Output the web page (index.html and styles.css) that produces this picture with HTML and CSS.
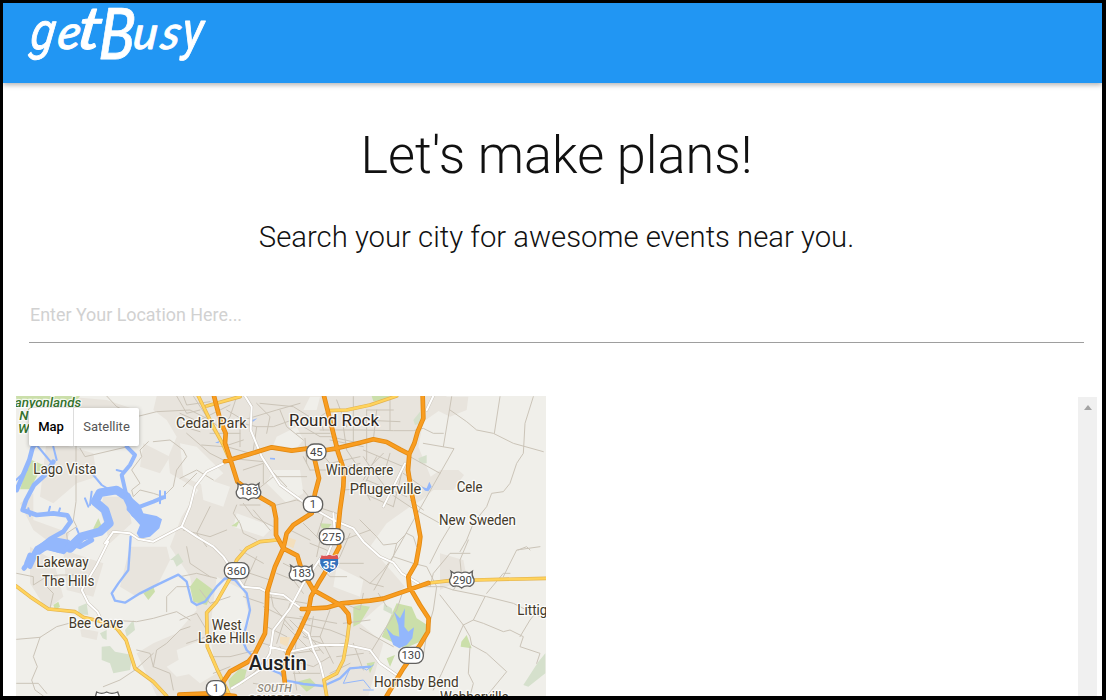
FILE: index.html
```html
<!DOCTYPE html>
<html lang="en">
<head>
<meta charset="utf-8">
<title>getBusy</title>
<link rel="stylesheet" href="styles.css">
</head>
<body>
<div class="page">
  <header class="nav">
    <svg class="logo" viewBox="0 0 210 80" width="210" height="80" role="img" aria-label="getBusy">
      <g class="logo-text">
        <text class="logo-round" transform="translate(26 46) skewX(-8) scale(1 1.15)" font-size="45">g</text>
        <text transform="translate(53 46) skewX(-8)" font-size="48">e</text>
        <text transform="translate(73 46) skewX(-8) scale(1.25 1.15)" font-size="52">t</text>
        <text transform="translate(95 56) skewX(-3) scale(.84 1)" font-size="71">B</text>
        <text transform="translate(129 46) skewX(-6)" font-size="46">u</text>
        <text transform="translate(156 46) skewX(-12)" font-size="47">s</text>
        <text class="logo-round" transform="translate(179 46) skewX(-2) scale(1 1.15)" font-size="46">y</text>
      </g>
    </svg>
  </header>
  <main class="main">
    <h1 class="title">Let's make plans!</h1>
    <p class="subtitle">Search your city for awesome events near you.</p>
    <input class="location" type="text" placeholder="Enter Your Location Here...">
    <div class="results">
      <section class="map">
        <svg class="map-canvas" viewBox="18 18 1590 900" width="530" height="300">
          <rect x="18" y="18" width="1590" height="900" fill="#f0efea"/>
          <g class="urban">
            <path d="M440 18H1310L1290 60L1240 95L1225 170L1262 260L1290 240L1345 240L1362 255L1330 300L1270 300L1235 330L1200 350L1130 400L1080 470L1150 550L1185 590L1105 650L1050 700L1120 760L1075 918H440L380 790L430 760L500 730L560 660L540 560L480 470L515 380L565 300L480 250L475 200L500 140L470 90L430 60Z"/>
            <path d="M150 18L290 30L380 60L300 130L220 110ZM110 150L250 190L260 260L200 280L130 340L90 320ZM280 320L350 320L365 400L300 460L270 360ZM30 340L70 310L70 390L180 430L150 480L70 420ZM400 160L480 200L450 250L390 230ZM60 470L130 510L160 620L110 660L60 580ZM160 480L280 520L250 620L170 600ZM360 470L470 470L480 510L440 590L380 620L330 590ZM210 715L265 725L260 750L215 740ZM1270 20L1375 20L1370 60L1320 80L1280 60ZM1050 360L1090 380L1080 410L1050 440ZM1290 490L1360 510L1370 560L1290 600Z"/>
          </g>
          <g fill="#f0efea">
            <path d="M510 160L560 170L640 250L590 290L520 260ZM800 140L860 110L880 150L860 175L790 165ZM790 240L870 240L880 310L830 340L770 280ZM570 260L660 290L640 350L580 330ZM680 370L790 410L760 440L670 410ZM980 530L1060 570L1050 620L970 590ZM500 780L600 740L620 850L570 880L510 830ZM620 560L700 600L720 690L690 760L620 760L605 680ZM470 830L540 790L550 850L500 860ZM900 20L930 20L920 60L880 60ZM340 900L380 850L390 910Z"/>
          </g>
          <g class="park">
            <path d="M18 18H210L200 32L120 28L20 35ZM65 210L100 225L80 260L60 298L30 298L45 250ZM250 415L265 385L280 420L255 425ZM540 590L560 563L610 600L590 645L550 635ZM400 610L430 590L435 605L415 630ZM664 408L690 390L680 410ZM930 400L965 402L955 415L935 415ZM1160 640L1205 650L1220 685L1260 710L1230 755L1185 775L1115 740ZM1354 755L1370 735L1385 775L1352 770ZM1030 650L1050 645L1080 650L1050 700L1030 710ZM1070 820L1095 815L1080 850ZM1130 805L1155 795L1140 830ZM655 870L690 835L710 840L700 880L660 895ZM860 875L900 865L920 885L890 905ZM1085 18H1140L1120 30L1090 34ZM130 645L145 635L150 650L135 660Z"/>
            <path class="park-dark" d="M275 770L300 768L315 785L368 795L360 840L310 850L300 820L275 810ZM345 720L370 690L375 720L350 740ZM1210 90L1230 65L1235 100L1215 105ZM1225 205L1250 195L1250 220L1230 220ZM480 510L505 490L520 515L500 530L490 510ZM1585 815L1606 790V850L1555 890L1540 885ZM270 730L290 720L290 750L278 745ZM205 650L230 640L235 675L205 672ZM1122 642L1145 655L1150 675L1120 660Z"/>
          </g>
          <path fill="#f3dfbd" d="M830 440L858 450L850 475L828 465ZM810 740L840 742L832 770L810 760Z"/>
          <g class="minor">
            <path d="M210 175L225 200L345 172M198 168V335L190 390L200 410L170 430L175 480M290 18L320 50L380 80L440 65L540 60L600 90L650 130M500 18L530 70L570 60M430 155L480 150L520 180L530 200L500 240L490 290L460 320L430 310L390 300L370 320L365 300L390 280L365 240L395 200L390 180L415 155M520 18L530 45L600 35M20 550L70 560L70 585L110 560L150 555L230 555M120 655L130 610L110 590M20 748L90 742L140 710L195 695M90 742L70 800L82 830L65 870L75 900L100 918M20 880H85L110 910M280 890L330 870L375 840L430 790M295 690L380 695L430 685L500 665L540 690M470 665L470 620L500 590L540 590M430 830L440 780L470 760L510 720L540 710M430 830L480 850L490 900M380 780L420 790L430 830"/>
            <path d="M510 70L600 110L650 170L720 190M530 130L600 190L640 210M560 250L520 290M610 270L560 240L510 265M650 90L740 110L790 110L860 85M650 60L700 90L800 60L870 40M810 60L830 110L880 150M740 40L780 80L770 130M660 205L760 215L830 290M700 240L760 220L760 280M735 305L790 260L890 260M680 345L670 370L690 400L700 430L740 450M690 345L750 345M780 350L860 330L900 345M880 300L920 350L980 370M900 240L980 240L1050 220M930 120L1050 120L1150 122L1210 122L1240 115L1270 130L1300 130M880 110L930 140L960 140L1050 160M1000 110L1010 180L1050 240M880 200L900 240M960 60L930 80L940 120M980 30L1010 110M1000 260L1070 240L1120 190M1000 300L1130 290M1060 200L1080 230L1140 310L1200 350L1290 400M1090 230L1060 290L1080 330M1140 20V120M1070 60L1150 60M1240 160L1332 176L1092 600M1300 170L1325 20M1200 200L1290 250M1180 250L1250 300M1200 330L1240 360M1320 60L1370 95L1400 120L1450 130L1510 160L1600 185M1453 130L1470 20M1570 20L1545 100L1540 190L1520 220L1500 280L1480 305L1445 310L1430 350L1390 400L1370 450L1350 485M1320 410L1290 460L1260 520M1524 480L1550 470L1560 480M1050 390L1100 440L1120 465L1160 460L1190 430L1210 440L1220 470M1160 460L1150 500L1120 540L1080 580M1150 500L1210 520L1250 530L1280 590L1270 660L1250 730L1240 800M1050 560L1080 580L1120 590M1200 590L1260 590L1300 590L1330 600L1430 620L1510 640L1590 680M1260 590L1270 550L1320 490L1380 490M1375 450L1350 510L1355 560L1330 600M1425 620L1390 690L1420 700L1480 725L1500 720L1540 740L1530 770L1590 790L1580 820M1590 470L1520 480L1480 560M1430 610L1480 550H1500M1390 690L1360 705L1290 615M1360 705L1295 850L1270 900M1360 705L1380 740L1385 765L1430 790L1490 845L1430 918M1380 770L1375 850L1390 880L1380 918M1530 740L1560 690L1580 665M1180 600L1160 660L1080 790M1105 610L1130 650M1050 715L1150 770"/>
            <path d="M510 560L560 550L620 565M530 470L540 520L600 560M570 600L600 640L660 620M510 690L560 670L590 720M530 760L590 740M620 700L680 730L700 760M600 800L660 800L740 780M610 850L660 830M700 620L760 640M690 540L750 560L780 570M740 500L700 590M690 480L760 520M800 550L850 570L880 610M820 520L900 560M760 650L820 680L900 690M770 620L890 640M780 600L790 650L850 720M840 640L800 760M770 710L830 740M760 760L850 790L930 780M840 690L890 740L930 740M870 700L960 720L1010 740M880 740L960 770L1000 760M910 680L900 740L940 790M960 660L930 740L970 820M840 810L910 830L960 800M850 850L930 850M770 800L730 850M730 880L800 890M960 850L1020 820M980 800L1060 790M1000 700L1080 690M1000 640L1050 660L1060 610M920 520L960 560L1010 560M900 460L950 480L980 520L1060 520M880 400L930 450L920 500M840 420L900 450M790 410L730 380L700 340M940 380L920 440M1020 430L990 500L970 530M1000 450L1080 420M1030 760L1060 840M860 740L850 830L860 900M820 700L910 790M870 680L980 700M810 770L870 850M600 350L560 430L590 470M520 420L600 440L650 420M730 360L780 420"/>
            <path d="M550 18L590 80M570 90L660 45M680 20L660 80L640 110M690 80L690 170M740 110L730 180M600 130L690 130M575 165L640 170L700 150M520 110L570 125M750 40L850 50L930 100M860 130L960 130M885 145L890 220M925 180L960 220L1050 200M1030 20V160M1070 60V210M1100 60L1090 150M1050 90L1170 95M960 150L1060 170M1060 180L1180 230M1100 200L1060 270M1140 190L1120 260M1070 270L1190 320M1060 310L1150 350M1180 230L1150 350"/>
          </g>
          <g class="river">
            <path d="M68 172L58 210L20 300M130 215L105 255L72 285L48 330L38 360L80 375L130 370L172 376L182 395L160 425L120 447L85 475L60 530" stroke-width="14"/>
            <path d="M180 475L215 440L270 425L298 400L285 360L255 335L270 308L320 300L350 320L375 370" stroke-width="26"/>
            <path d="M350 320L335 255L360 225L375 195L350 170M390 350L430 335L460 322" stroke-width="12"/>
            <path d="M65 180L80 165L130 225M250 255L275 285L300 300M320 240L340 245M18 270L50 240M60 378L55 355M115 370L120 350M145 370L150 355M235 350L225 325M245 305L240 345M210 440L200 415M450 340V303M465 325V305M130 170L140 210" stroke-width="6"/>
            <path d="M42 535L65 505L80 480L115 472L160 485L185 460L205 440M150 480L180 460L210 470L245 450M50 520L60 495" stroke-width="15"/>
            <path d="M362 440L355 540L325 580L305 610L315 632L345 638L390 610L430 590L505 554L530 575L545 635L560 645L585 635L620 590L645 565L675 570L710 610L720 660L708 710L697 750L710 780L760 830L810 850L830 872L880 882L940 888L990 865L1020 835L1080 830" stroke-width="7"/>
            <path d="M1020 835L1000 880L1060 870L1080 895M1050 830L1070 840L1090 825M1060 900L1090 900" stroke-width="3"/>
          </g>
          <path class="water" d="M350 310L390 345L400 370L440 378L456 388L448 415L420 440L390 446L380 430L390 405L350 360ZM75 470L125 440L180 450L150 490L110 480L80 500L50 515ZM1235 290L1250 295L1258 275L1265 290L1255 304L1245 302ZM1152 665L1170 685L1185 655L1183 710L1195 725L1212 712L1207 745L1190 765L1168 775L1150 765L1140 740L1128 713L1150 735L1168 740L1165 705ZM725 90L742 85L728 96ZM780 203L795 204V209L780 208ZM615 158L630 152L625 160Z"/>
          <g class="white"><use href="#local-roads"/></g>
          <g class="white-in">
            <path id="local-roads" d="M705 18L725 50L722 120L755 200L810 285L900 350L970 390L1030 415L1060 455L1110 500L1150 518L1175 550L1225 580M650 216L590 245L555 290L540 350L515 410L430 455L385 447L360 430L310 425L285 460M295 455L260 525L215 600L235 640L262 665L280 700M515 410L560 440L610 470L640 500L680 560L700 590L750 595L780 610L820 615L875 657M935 500L880 580L840 655L790 720L780 790L750 840L690 880L665 895M780 770L840 785L930 765L1010 765L1080 780L1110 820L1160 855M875 715L895 730L910 780L930 820L945 880M1270 18L1250 60M1185 220L1120 350M970 370L975 440L950 500"/>
          </g>
          <g class="yellow-edge"><use href="#yellow"/></g>
          <g class="yellow"><path id="yellow" d="M18 588L60 620L115 657L195 665L220 682L265 692L320 715L348 750L375 835L430 875L470 918M565 18L590 70L615 120L640 165L655 200M590 48L690 20M955 62L1010 60L1080 45L1160 18M800 450L750 455L710 475L680 510L660 565L620 635L590 668L592 770L620 835L660 918M1018 697L1012 745L1000 810L980 850L942 870L950 918M1255 579L1320 572L1395 570L1608 565"/></g>
          <g class="orange-edge"><use href="#orange"/></g>
          <g class="orange"><path id="orange" d="M612 18L620 50L632 95L647 130L645 160L660 205L682 275L715 300L755 325L790 345L798 385L798 435L820 475L862 497L875 540L910 600L960 628L995 648L1015 672L1018 697M645 214L720 192L785 172L845 182L890 176L950 180L980 175L1050 158L1090 148L1130 156L1170 178L1197 192M942 18L965 110L985 190L1002 240L1000 290L990 360L982 440L988 470L965 515L925 580L903 620L895 665L865 730L835 785L820 840L825 882M912 200L927 265L915 310L905 370L850 405L830 430L820 475L795 530L772 605L770 660L765 730L735 790L715 815L660 845L640 875L620 912M1238 18L1240 85L1223 125L1213 160L1198 192L1194 240L1205 310L1220 380L1231 440L1228 465L1218 520L1195 560L1198 590L1230 645L1256 685L1254 725L1230 765L1180 835L1130 918M875 657L950 653L995 640L1080 632L1120 626L1200 598L1255 579M508 914L600 910L675 918"/></g>
          <g class="shield">
            <path d="M683 280L692 286Q704 279 715 285Q726 279 738 286L747 280Q744 292 752 304Q754 318 740 325Q725 321 715 330Q704 321 690 325Q677 318 679 304Q687 293 683 280Z"/>
            <path d="M842 526L851 532Q863 525 874 531Q885 525 897 532L906 526Q903 538 911 550Q913 564 899 571Q884 567 874 576Q863 567 849 571Q836 564 838 550Q846 539 842 526Z"/>
            <path d="M1323 544L1332 550Q1344 543 1355 549Q1366 543 1378 550L1387 544Q1384 556 1392 568Q1394 582 1380 589Q1365 585 1355 594Q1344 585 1330 589Q1317 582 1319 568Q1327 557 1323 544Z"/>
            <path d="M260 906Q275 914 290 906Q305 914 323 906L330 925H255Z"/>
            <rect x="890" y="162" width="58" height="48" rx="22"/><rect x="880" y="319" width="58" height="48" rx="22"/><rect x="928" y="416" width="74" height="48" rx="22"/><rect x="643" y="518" width="74" height="48" rx="22"/><rect x="1166" y="772" width="74" height="48" rx="22"/><rect x="589" y="872" width="58" height="48" rx="22"/>
          </g>
          <path d="M936 497Q945 500 958 494Q970 500 982 494L986 508Q992 535 958 549Q925 535 929 508Z" fill="#3572bd" stroke="#fff" stroke-width="3"/>
          <path d="M935 496Q946 500 958 494Q970 500 982 494L986 507H930Z" fill="#dc5454"/>
          <g class="route"><text x="717" y="315">183</text><text x="875" y="561">183</text><text x="1357" y="581">290</text><text x="919" y="198">45</text><text x="909" y="354">1</text><text x="965" y="452">275</text><text x="680" y="554">360</text><text x="1203" y="808">130</text><text x="618" y="907">1</text><text class="interstate" x="958" y="537">35</text></g>
          <g class="park-label"><text x="14" y="52" textLength="200" lengthAdjust="spacingAndGlyphs">anyonlands</text><text x="28" y="91">N</text><text x="24" y="130">W</text></g>
          <g class="place">
            <text x="70" y="251" textLength="190" lengthAdjust="spacingAndGlyphs">Lago Vista</text>
            <text x="498" y="115" textLength="212" lengthAdjust="spacingAndGlyphs">Cedar Park</text>
            <text x="947" y="254" textLength="203" lengthAdjust="spacingAndGlyphs">Windemere</text>
            <text x="1019" y="313" textLength="215" lengthAdjust="spacingAndGlyphs">Pflugerville</text>
            <text x="1340" y="307" textLength="78" lengthAdjust="spacingAndGlyphs">Cele</text>
            <text x="1287" y="405" textLength="231" lengthAdjust="spacingAndGlyphs">New Sweden</text>
            <text x="79" y="530" textLength="157" lengthAdjust="spacingAndGlyphs">Lakeway</text>
            <text x="96" y="588" textLength="157" lengthAdjust="spacingAndGlyphs">The Hills</text>
            <text x="176" y="714" textLength="164" lengthAdjust="spacingAndGlyphs">Bee Cave</text>
            <text x="605" y="719" textLength="90" lengthAdjust="spacingAndGlyphs">West</text>
            <text x="564" y="760" textLength="172" lengthAdjust="spacingAndGlyphs">Lake Hills</text>
            <text x="1522" y="674" textLength="90" lengthAdjust="spacingAndGlyphs">Littig</text>
            <text x="1092" y="892" textLength="254" lengthAdjust="spacingAndGlyphs">Hornsby Bend</text>
            <text x="1290" y="937" textLength="206" lengthAdjust="spacingAndGlyphs">Webberville</text>
            <text class="town" x="837" y="108" textLength="270" lengthAdjust="spacingAndGlyphs">Round Rock</text>
            <text class="city" x="716" y="839" textLength="174" lengthAdjust="spacingAndGlyphs">Austin</text>
          </g>
          <g class="district"><text x="742" y="905" textLength="103" lengthAdjust="spacingAndGlyphs">SOUTH</text><text x="714" y="938" textLength="160" lengthAdjust="spacingAndGlyphs">CONGRESS</text></g>
        </svg>
        <div class="map-types"><button class="map-type active">Map</button><button class="map-type">Satellite</button></div>
      </section>
      <div class="event-list"><div class="scrollbar"><span class="scroll-up"></span></div></div>
    </div>
  </main>
</div>
</body>
</html>
```
FILE: styles.css
```css
* { box-sizing: border-box; }
body { margin: 0; font-family: Roboto, sans-serif; color: #212121; }
.page { height: 700px; border: 3px solid #000; border-right-width: 4px; border-bottom-width: 4px; background: #fff; overflow: hidden; display: flex; flex-direction: column; }
.nav { height: 80px; flex: none; background: #2196f3; box-shadow: 0 2px 5px rgba(0,0,0,.3); }
.logo { display: block; }
.logo-text { font-family: Lato, sans-serif; font-style: italic; font-weight: 500; fill: #fff; stroke: #fff; stroke-width: .8; stroke-linejoin: round; }
.logo-round { font-family: Roboto, sans-serif; font-weight: 400; }
.main { flex: 1; min-height: 0; padding-left: 13px; padding-right: 5px; }
.title { margin: 41px 0 0; text-align: center; font-size: 52.2px; line-height: 64px; font-weight: 300; color: #111; }
.subtitle { margin: 29px 0 0; text-align: center; font-size: 29.28px; line-height: 40px; font-weight: 300; color: #111; }
.location { display: block; width: calc(100% - 26px); height: 57px; margin: 29px 0 0 13px; padding: 0 1px; border: 0; border-bottom: 1px solid #9e9e9e; outline: 0; font: 400 17.9px Roboto, sans-serif; background: transparent; }
.location::placeholder { color: #d1d1d1; opacity: 1; }
.results { margin-top: 53px; height: 300px; display: flex; }
.map { position: relative; width: 530px; height: 300px; flex: none; overflow: hidden; }
.map-canvas { display: block; }
.map-types { position: absolute; left: 13px; top: 12px; display: flex; height: 38px; border-radius: 2px; background: #fff; box-shadow: 0 1px 4px rgba(0,0,0,.3); }
.map-type { border: 0; background: transparent; padding: 0 0 2px; width: 65px; font: 400 13px Roboto, sans-serif; color: #565656; }
.map-type.active { width: 45px; font-weight: 500; color: #000; border-right: 1px solid #ddd; }
.event-list { flex: 1; display: flex; justify-content: flex-end; padding-top: 1px; }
.scrollbar { width: 19px; background: #f0f0f0; display: flex; justify-content: center; padding-top: 8px; }
.scroll-up { width: 0; height: 0; border: 4px solid transparent; border-top: 0; border-bottom: 5px solid #a3a3a3; }

.urban { fill: #e8e4dd; }
.park { fill: #cbdfaa; }
.park-dark { fill: #d5e0cc; }
.water { fill: #93b7fc; }
.minor, .river, .white, .white-in, .yellow, .yellow-edge, .orange, .orange-edge { fill: none; stroke-linejoin: round; stroke-linecap: round; }
.minor { stroke: #cbc4b8; stroke-width: 3; }
.river { stroke: #93b7fc; }
.white { stroke: #cbc5bb; stroke-width: 9; }
.white-in { stroke: #fff; stroke-width: 6; }
.white path, .yellow-edge path, .orange-edge path { stroke: inherit; }
.yellow-edge { stroke: #e3b34e; stroke-width: 11; }
.yellow { stroke: #ffd35c; stroke-width: 7; }
.orange-edge { stroke: #e28a13; stroke-width: 14; }
.orange { stroke: #f99d20; stroke-width: 9; }
.shield { fill: #fff; stroke: #62615f; stroke-width: 4; }
.route { font: 400 34px Roboto, sans-serif; text-anchor: middle; fill: #444; }
.interstate { fill: #fff; font-weight: 700; }
.place { font: 400 42px Roboto, sans-serif; fill: #433929; stroke: #fff; stroke-width: 8; stroke-opacity: .8; stroke-linejoin: round; paint-order: stroke; }
.town { font-size: 51px; fill: #2e261d; }
.city { font-size: 58px; font-weight: 500; fill: #222; }
.park-label { font: italic 500 40px Roboto, sans-serif; fill: #35732d; stroke: #fff; stroke-width: 7; stroke-opacity: .8; paint-order: stroke; }
.district { font: italic 500 32px Roboto, sans-serif; fill: #938b7c; stroke: #fff; stroke-width: 7; stroke-opacity: .8; paint-order: stroke; }
```
